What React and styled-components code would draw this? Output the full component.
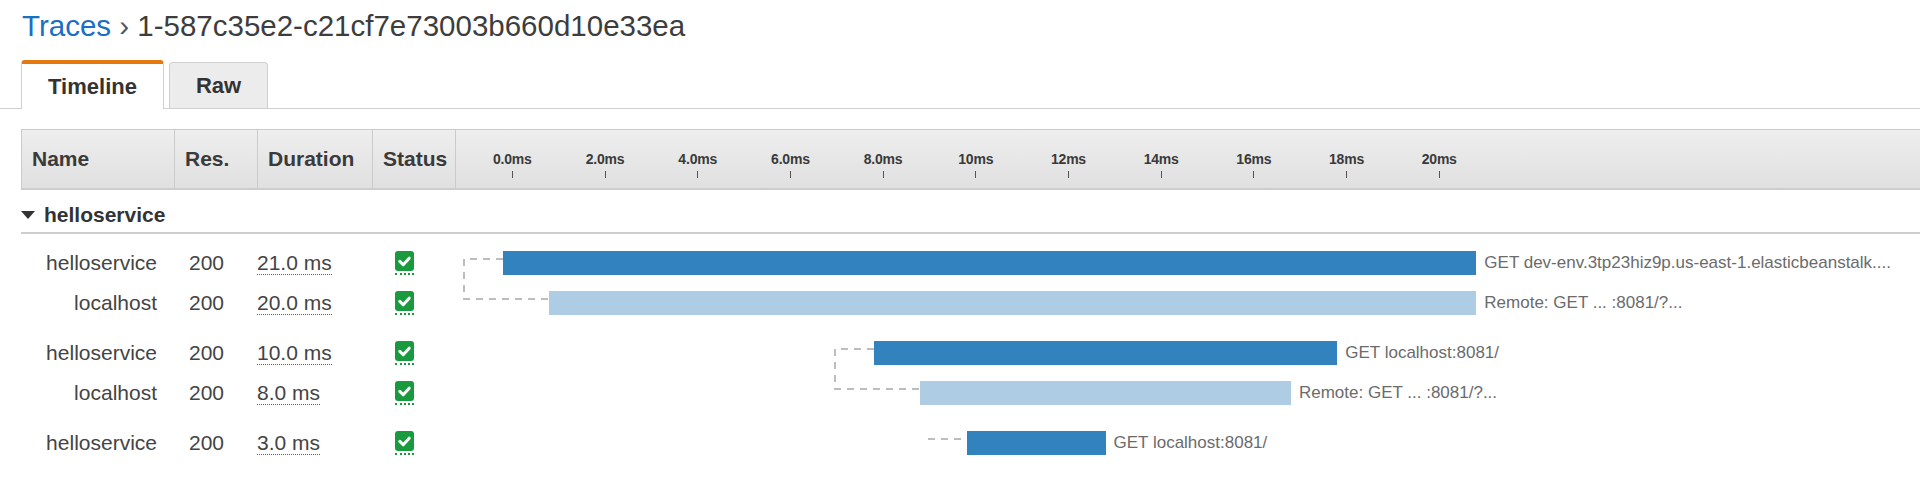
import React from 'react';
import styled, { createGlobalStyle, css } from 'styled-components';

const GlobalStyle = createGlobalStyle`
  html, body {
    margin: 0;
    background: #fff;
  }
  body {
    font-family: "Liberation Sans", Arial, Helvetica, sans-serif;
    color: #444;
  }
`;

// timeline scale, measured off the axis: 0ms sits 48px into the column
const PX_PER_MS = 46.35;
const ORIGIN = 48;
const LEAD = 40;
const COLS = '153px 83px 115px 83px 1fr';

const TICKS = ['0.0ms', '2.0ms', '4.0ms', '6.0ms', '8.0ms', '10ms', '12ms', '14ms', '16ms', '18ms', '20ms'];

const groups = [
  [
    { name: 'helloservice', res: 200, duration: '21.0 ms', start: 0, length: 21, label: 'GET dev-env.3tp23hiz9p.us-east-1.elasticbeanstalk....' },
    { name: 'localhost', res: 200, duration: '20.0 ms', start: 1, length: 20, remote: true, label: 'Remote: GET ... :8081/?...' },
  ],
  [
    { name: 'helloservice', res: 200, duration: '10.0 ms', start: 8, length: 10, label: 'GET localhost:8081/' },
    { name: 'localhost', res: 200, duration: '8.0 ms', start: 9, length: 8, remote: true, label: 'Remote: GET ... :8081/?...' },
  ],
  [
    { name: 'helloservice', res: 200, duration: '3.0 ms', start: 10, length: 3, label: 'GET localhost:8081/' },
  ],
];

const Page = styled.div`
  width: 1920px;
`;

const Title = styled.h1`
  margin: 0;
  padding: 9px 22px 0;
  font-size: 29.5px;
  line-height: 34px;
  font-weight: normal;
  color: #3d3d3d;
`;

const Crumb = styled.a`
  color: #1b6ec2;
  text-decoration: none;
`;

const Sep = styled.span`
  color: #555;
`;

const Tabs = styled.div`
  display: flex;
  align-items: flex-end;
  gap: 5px;
  height: 48px;
  margin-top: 17px;
  padding-left: 21px;
  border-bottom: 1px solid #cfcfcf;
`;

const Tab = styled.div`
  box-sizing: border-box;
  display: flex;
  align-items: center;
  justify-content: center;
  border: 1px solid #cfcfcf;
  border-bottom: none;
  border-radius: 4px 4px 0 0;
  font-size: 22px;
  font-weight: bold;
  color: #333;

  ${(p) =>
    p.$active
      ? css`
          width: 143px;
          height: 49px;
          margin-bottom: -1px;
          border-top: 4px solid #e47911;
          background: #fff;
        `
      : css`
          width: 99px;
          height: 46px;
          background: #ececec;
        `}
`;

const Table = styled.div`
  margin: 20px 0 0 21px;
`;

const Header = styled.div`
  display: grid;
  grid-template-columns: ${COLS};
  box-sizing: border-box;
  height: 61px;
  border-top: 1px solid #cbcbcb;
  border-bottom: 2px solid #cdcdcd;
  background: linear-gradient(#eeeeee, #e0e0e0);
`;

const HeadCell = styled.div`
  display: flex;
  align-items: center;
  padding-left: 10px;
  border-left: 1px solid #cbcbcb;
  font-size: 21px;
  font-weight: bold;
  color: #3a3a3a;
`;

const Axis = styled(HeadCell)`
  align-items: flex-start;
  padding: 21px 0 0 10px;
`;

const Tick = styled.div`
  flex: none;
  width: 92.7px;
  display: flex;
  flex-direction: column;
  align-items: center;
  font-size: 14px;
  line-height: 16px;
  letter-spacing: -0.2px;
`;

const TickMark = styled.span`
  width: 1px;
  height: 7px;
  margin-top: 4px;
  background: #555;
`;

const GroupRow = styled.div`
  display: flex;
  align-items: center;
  gap: 9px;
  box-sizing: border-box;
  height: 44px;
  padding-top: 8px;
  border-bottom: 2px solid #cdcdcd;
  font-size: 21px;
  font-weight: bold;
  color: #333;
`;

const Caret = styled.span`
  width: 0;
  height: 0;
  border-left: 7px solid transparent;
  border-right: 7px solid transparent;
  border-top: 8px solid #333;
`;

const SpanList = styled.div`
  display: flex;
  flex-direction: column;
  gap: 10px;
  padding-top: 9px;
`;

const Group = styled.div`
  display: flex;
  flex-direction: column;
`;

const Row = styled.div`
  display: grid;
  grid-template-columns: ${COLS};
  align-items: center;
  height: 40px;
  font-size: 21px;
  color: #444;
`;

const NameCell = styled.div`
  text-align: right;
  padding-right: 17px;
`;

const ResCell = styled.div`
  padding-left: 15px;
`;

const DurCell = styled.div`
  padding-left: 0;
`;

const Dotted = styled.span`
  display: inline-block;
  line-height: 22px;
  border-bottom: 1px dotted #1f6fc0;
`;

const StatusCell = styled.div`
  display: flex;
  padding-left: 23px;
`;

const Ok = styled.span`
  display: inline-flex;
  padding-bottom: 2px;
  border-bottom: 2px dotted #1a9a3e;

  svg {
    display: block;
  }
`;

const TimelineCell = styled.div`
  position: relative;
  align-self: stretch;
  display: flex;
  align-items: center;
`;

const Bar = styled.div`
  flex: none;
  height: 24px;
  background: ${(p) => (p.$remote ? '#aecde4' : '#3182bd')};
`;

const BarLabel = styled.span`
  margin-left: 8px;
  font-size: 17px;
  color: #6b6b6b;
  white-space: nowrap;
`;

const Wire = styled.svg`
  position: absolute;
  top: 15px;
  overflow: visible;
  pointer-events: none;
`;

const Check = () => (
  <Ok>
    <svg width="19" height="20" viewBox="0 0 19 20">
      <rect width="19" height="20" rx="3" fill="#1a9a3e" />
      <path d="M4.8 10.4l3.4 3.4 6-6.6" fill="none" stroke="#fff" strokeWidth="3" strokeLinecap="round" strokeLinejoin="round" />
    </svg>
  </Ok>
);

const Connector = ({ x, drop, reach }) => {
  const d = drop ? `M${LEAD} 1H1V${drop + 1}H${reach}` : `M1 1H${LEAD}`;
  return (
    <Wire style={{ left: x }} width={Math.max(LEAD, reach) + 2} height={drop + 2}>
      <path d={d} fill="none" stroke="#bdbdbd" strokeWidth="2" strokeDasharray="7 6" />
    </Wire>
  );
};

const SpanRow = ({ span, child, first }) => {
  const left = ORIGIN + span.start * PX_PER_MS;
  return (
    <Row>
      <NameCell>{span.name}</NameCell>
      <ResCell>{span.res}</ResCell>
      <DurCell>
        <Dotted>{span.duration}</Dotted>
      </DurCell>
      <StatusCell>
        <Check />
      </StatusCell>
      <TimelineCell>
        {first && (
          <Connector
            x={left - LEAD}
            drop={child ? 40 : 0}
            reach={child ? LEAD + (child.start - span.start) * PX_PER_MS : LEAD}
          />
        )}
        <Bar $remote={span.remote} style={{ marginLeft: left, width: span.length * PX_PER_MS }} />
        <BarLabel>{span.label}</BarLabel>
      </TimelineCell>
    </Row>
  );
};

export default function App() {
  return (
    <Page>
      <GlobalStyle />
      <Title>
        <Crumb href="#traces">Traces</Crumb>
        <Sep> › </Sep>
        1-587c35e2-c21cf7e73003b660d10e33ea
      </Title>

      <Tabs>
        <Tab $active>Timeline</Tab>
        <Tab>Raw</Tab>
      </Tabs>

      <Table>
        <Header>
          <HeadCell>Name</HeadCell>
          <HeadCell>Res.</HeadCell>
          <HeadCell>Duration</HeadCell>
          <HeadCell>Status</HeadCell>
          <Axis>
            {TICKS.map((t) => (
              <Tick key={t}>
                {t}
                <TickMark />
              </Tick>
            ))}
          </Axis>
        </Header>

        <GroupRow>
          <Caret />
          helloservice
        </GroupRow>

        <SpanList>
          {groups.map((group, gi) => (
            <Group key={gi}>
              {group.map((span, i) => (
                <SpanRow key={i} span={span} first={i === 0} child={i === 0 ? group[1] : null} />
              ))}
            </Group>
          ))}
        </SpanList>
      </Table>
    </Page>
  );
}
